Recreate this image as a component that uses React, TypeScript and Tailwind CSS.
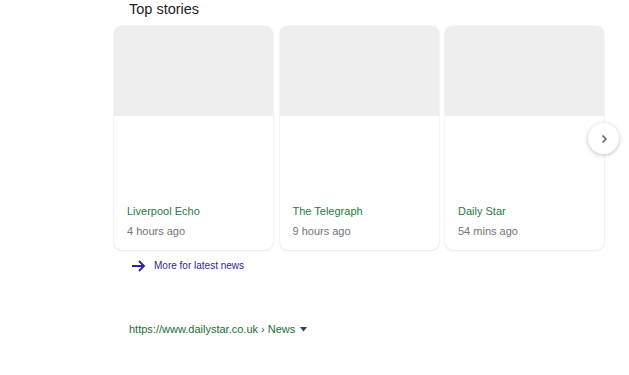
const stories = [
  { source: 'Liverpool Echo', time: '4 hours ago' },
  { source: 'The Telegraph', time: '9 hours ago' },
  { source: 'Daily Star', time: '54 mins ago' },
];

function StoryCard({ source, time }: { source: string; time: string }) {
  return (
    <div className="flex h-[224px] w-[159px] flex-col overflow-hidden rounded-lg bg-white shadow-[0_0_2px_rgba(0,0,0,0.12),0_1px_2px_rgba(0,0,0,0.06)]">
      <div className="h-[90px] bg-[#eeeeee]" />
      <div className="flex flex-1 flex-col justify-end px-[13px] pb-[12px]">
        <div className="text-[11px] leading-[14px] text-[#2a7a45]">{source}</div>
        <div className="mt-[6px] text-[11px] leading-[14px] text-[#70757a]">{time}</div>
      </div>
    </div>
  );
}

export default function App() {
  return (
    <div className="h-[375px] w-[629px] overflow-hidden bg-white font-['Liberation_Sans',Arial,sans-serif]">
      <div className="pl-[129px] text-[14.5px] leading-[18px] text-[#202124]">Top stories</div>

      <div className="relative ml-[114px] mt-[8px] w-[490px]">
        <div className="flex gap-[6.5px]">
          {stories.map((s) => (
            <StoryCard key={s.source} source={s.source} time={s.time} />
          ))}
        </div>
        <button
          type="button"
          aria-label="Next"
          className="absolute right-[-15px] top-[97px] flex h-[31px] w-[31px] items-center justify-center rounded-full bg-white shadow-[0_1px_4px_rgba(0,0,0,0.25)]"
        >
          <svg width="12" height="12" viewBox="0 0 12 12" fill="none" stroke="#5f6368" strokeWidth="1.6">
            <path d="M4.5 2.5L8 6l-3.5 3.5" />
          </svg>
        </button>
      </div>

      <div className="ml-[131px] mt-[9px] flex items-center gap-[8px]">
        <svg width="15" height="14" viewBox="0 0 15 14" fill="none" stroke="#2f1fa0" strokeWidth="1.8">
          <path d="M1 7h12M8 2l5 5-5 5" />
        </svg>
        <span className="text-[10px] leading-[14px] text-[#2f1fa0]">More for latest news</span>
      </div>

      <div className="ml-[129px] mt-[49px] flex items-center gap-[5px] text-[11px] leading-[14px] text-[#1e6b35]">
        <span>https://www.dailystar.co.uk › News</span>
        <svg width="7" height="5" viewBox="0 0 7 5" fill="#3c4043">
          <path d="M0 0h7L3.5 4.5z" />
        </svg>
      </div>
    </div>
  );
}
